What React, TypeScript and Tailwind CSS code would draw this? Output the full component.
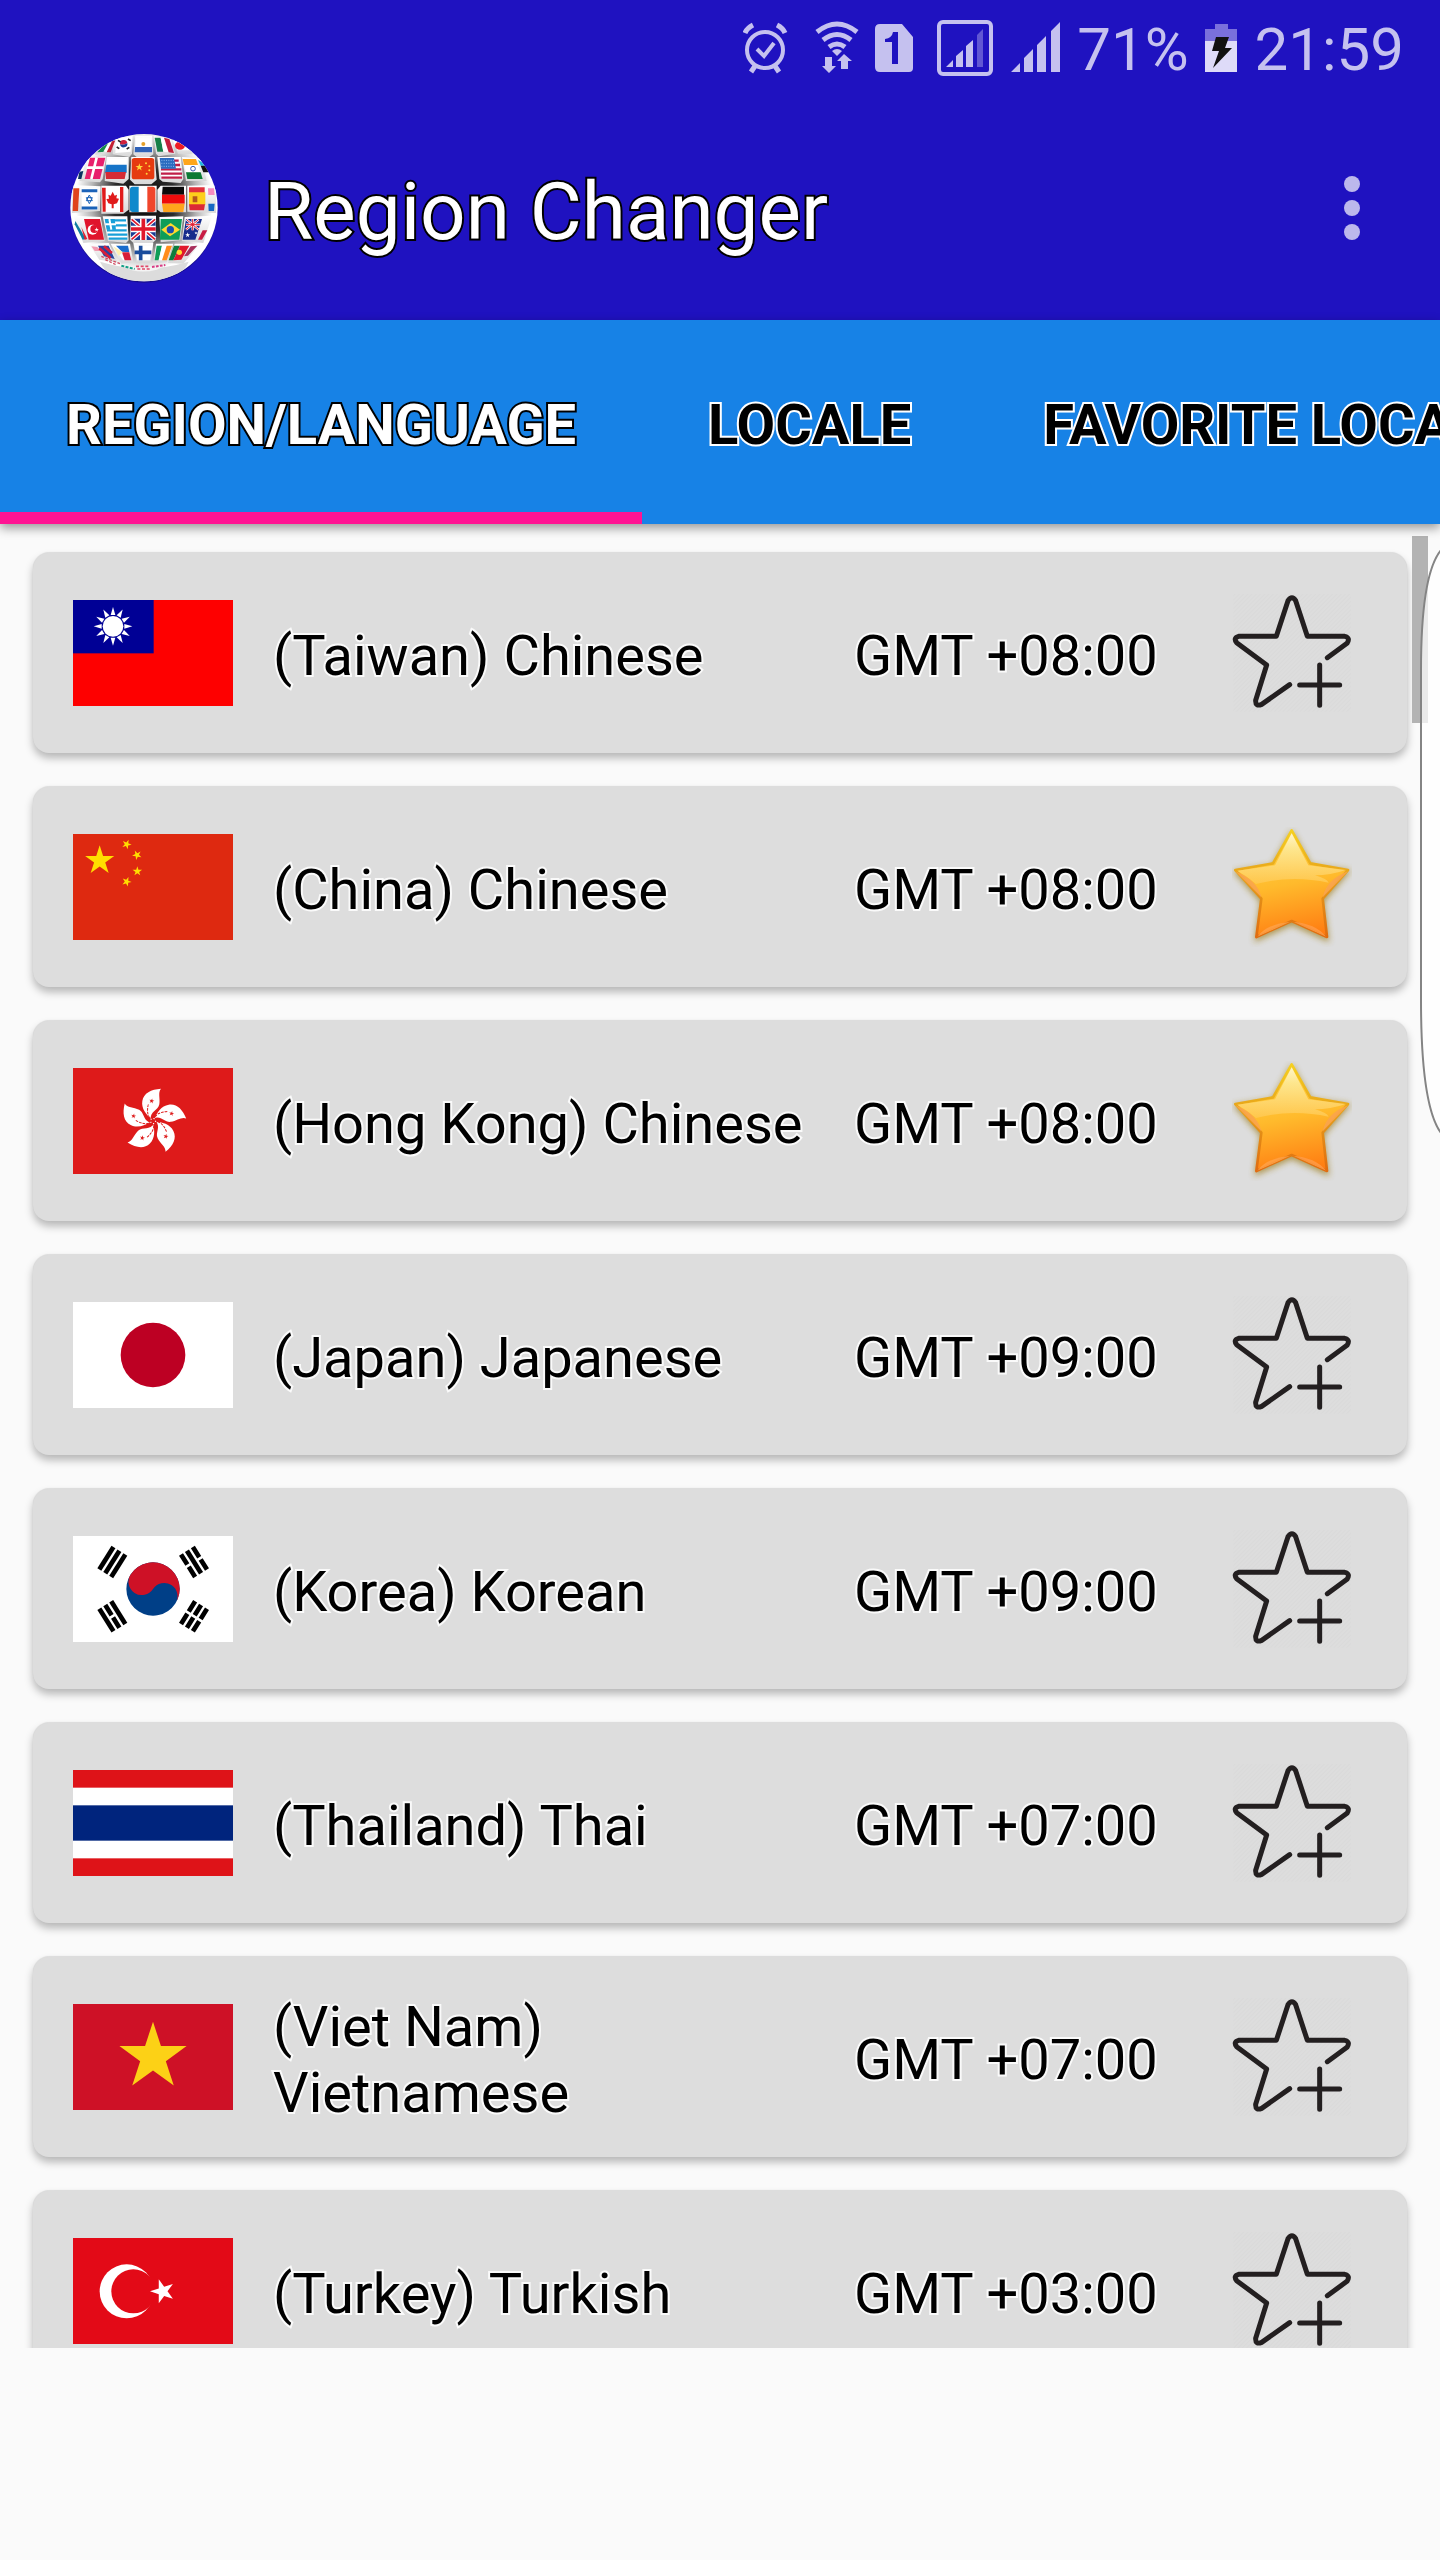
import React, { memo, useState } from 'react'
import clsx from 'clsx'

interface IRegion {
  country: string
  language: string
  gmt: string
  flag: React.ReactNode
}

interface IRegionCard {
  region: IRegion
  isFavorite: boolean
  onToggle: () => void
}

const starPoints = (cx: number, cy: number, r: number, turn = 0) =>
  Array.from({ length: 10 }, (_, i) => {
    const radius = i % 2 ? r * 0.382 : r
    const angle = ((i * 36 - 90 + turn) * Math.PI) / 180
    return `${(cx + radius * Math.cos(angle)).toFixed(1)},${(
      cy +
      radius * Math.sin(angle)
    ).toFixed(1)}`
  }).join(' ')

const TaiwanFlag = () => (
  <>
    <rect width="480" height="318" fill="#fe0000" />
    <rect width="242" height="160" fill="#000095" />
    <circle cx="120" cy="79" r="31" fill="#fff" />
    {Array.from({ length: 12 }, (_, i) => (
      <path
        key={i}
        d="M-7 -34 L0 -58 L7 -34Z"
        fill="#fff"
        transform={`translate(120 79) rotate(${i * 30})`}
      />
    ))}
  </>
)

const ChinaFlag = () => (
  <>
    <rect width="480" height="318" fill="#de2910" />
    <g fill="#ffde00">
      <polygon points={starPoints(80, 80, 46)} />
      <polygon points={starPoints(161, 31, 15, 23)} />
      <polygon points={starPoints(192, 63, 15, 46)} />
      <polygon points={starPoints(193, 112, 15, 0)} />
      <polygon points={starPoints(161, 143, 15, 21)} />
    </g>
  </>
)

const HongKongFlag = () => (
  <>
    <rect width="480" height="318" fill="#de1a1a" />
    {[0, 72, 144, 216, 288].map((turn) => (
      <g key={turn} transform={`translate(240 159) rotate(${turn})`}>
        <path
          d="M-3 -5 C-20 -18 -36 -38 -32 -60 C-28 -84 -6 -95 24 -97 C14 -86 22 -68 19 -50 C15 -30 -10 -30 -7 -2Z"
          fill="#fff"
        />
        <path
          d="M-10 -10 C-20 -22 -16 -42 -14 -50"
          fill="none"
          stroke="#de1a1a"
          strokeWidth="3"
          strokeDasharray="8 3"
        />
        <polygon points={starPoints(-4, -60, 8, 12)} fill="#de1a1a" />
      </g>
    ))}
  </>
)

const JapanFlag = () => (
  <>
    <rect width="480" height="318" fill="#fff" />
    <circle cx="240" cy="159" r="97" fill="#bd0023" />
  </>
)

const TRIGRAMS = [
  { x: 118, y: 78, turn: -58, broken: [false, false, false] },
  { x: 363, y: 78, turn: 58, broken: [true, false, true] },
  { x: 118, y: 241, turn: 58, broken: [false, true, false] },
  { x: 363, y: 241, turn: -58, broken: [true, true, true] },
]

const KoreaFlag = () => (
  <>
    <rect width="480" height="318" fill="#fff" />
    {TRIGRAMS.map(({ x, y, turn, broken }) => (
      <g
        key={`${x}-${y}`}
        transform={`translate(${x} ${y}) rotate(${turn})`}
        stroke="#000"
        strokeWidth="14"
      >
        {broken.map((isBroken, i) => (
          <path
            key={i}
            d={
              isBroken
                ? `M-40 ${i * 21 - 21}H-4M4 ${i * 21 - 21}H40`
                : `M-40 ${i * 21 - 21}H40`
            }
          />
        ))}
      </g>
    ))}
    <g transform="translate(240 159) rotate(33)">
      <circle r="80" fill="#003f87" />
      <path
        d="M-80 0A80 80 0 0 1 80 0A40 40 0 0 0 0 0A40 40 0 0 1 -80 0Z"
        fill="#ce1126"
      />
    </g>
  </>
)

const ThailandFlag = () => (
  <>
    <rect width="480" height="318" fill="#de1318" />
    <rect y="53" width="480" height="212" fill="#fff" />
    <rect y="106" width="480" height="106" fill="#00247d" />
  </>
)

const VietnamFlag = () => (
  <>
    <rect width="480" height="318" fill="#ce1126" />
    <polygon points={starPoints(240, 159, 106)} fill="#fcd116" />
  </>
)

const TurkeyFlag = () => (
  <>
    <rect width="480" height="318" fill="#e30a17" />
    <circle cx="161" cy="160" r="81" fill="#fff" />
    <circle cx="181" cy="160" r="66" fill="#e30a17" />
    <polygon points={starPoints(269, 160, 38, -90)} fill="#fff" />
  </>
)

const REGIONS: IRegion[] = [
  { country: 'Taiwan', language: 'Chinese', gmt: '+08:00', flag: <TaiwanFlag /> },
  { country: 'China', language: 'Chinese', gmt: '+08:00', flag: <ChinaFlag /> },
  { country: 'Hong Kong', language: 'Chinese', gmt: '+08:00', flag: <HongKongFlag /> },
  { country: 'Japan', language: 'Japanese', gmt: '+09:00', flag: <JapanFlag /> },
  { country: 'Korea', language: 'Korean', gmt: '+09:00', flag: <KoreaFlag /> },
  { country: 'Thailand', language: 'Thai', gmt: '+07:00', flag: <ThailandFlag /> },
  { country: 'Viet Nam', language: 'Vietnamese', gmt: '+07:00', flag: <VietnamFlag /> },
  { country: 'Turkey', language: 'Turkish', gmt: '+03:00', flag: <TurkeyFlag /> },
]

const TABS = ['REGION/LANGUAGE', 'LOCALE', 'FAVORITE LOCALE']

const StarAdd = () => (
  <svg viewBox="156 190 360 360" className="size-[120px]" fill="none">
    <defs>
      <pattern
        id="hatch"
        width="9"
        height="9"
        patternUnits="userSpaceOnUse"
        patternTransform="rotate(45)"
      >
        <path d="M1 0V9" stroke="#d7d7d7" strokeWidth="2" />
      </pattern>
    </defs>
    <rect x="160" y="193" width="353" height="353" fill="url(#hatch)" />
    <g
      stroke="#231f20"
      strokeWidth="15"
      strokeLinecap="round"
      strokeLinejoin="round"
    >
      <path d="M442 384L501 341Q512 324 494 320H382L347 213Q336 196 324 213L289 320H176Q159 325 170 339L260 406L227 512Q226 532 245 524L329 465" />
      <path d="M359 466H479M419 406V527" />
    </g>
  </svg>
)

const StarFull = () => (
  <svg viewBox="156 893 360 360" className="size-[120px]">
    <defs>
      <linearGradient id="starBody" x1="0.4" y1="0" x2="0.6" y2="1">
        <stop offset="0" stopColor="#ffd84a" />
        <stop offset="0.5" stopColor="#ffba2c" />
        <stop offset="1" stopColor="#ff7d12" />
      </linearGradient>
      <linearGradient id="starGloss" x1="0" y1="0" x2="0" y2="1">
        <stop offset="0" stopColor="#fffbe0" />
        <stop offset="0.3" stopColor="#fdeb9c" />
        <stop offset="1" stopColor="#ffc850" />
      </linearGradient>
      <linearGradient id="starEdge" x1="0" y1="0" x2="0" y2="1">
        <stop offset="0" stopColor="#f5d020" />
        <stop offset="0.5" stopColor="#e59a18" />
        <stop offset="1" stopColor="#e06c10" />
      </linearGradient>
      <filter id="starShadow" x="-10%" y="-10%" width="120%" height="125%">
        <feGaussianBlur stdDeviation="9" />
      </filter>
      <clipPath id="starClip">
        <path d="M335 900L391 1002L507 1020V1028L428 1108L445 1226L335 1175L226 1226L244 1108L162 1026V1020L279 1002Z" />
      </clipPath>
    </defs>
    <path
      d="M335 910L391 1010L505 1026L428 1116L443 1232L335 1183L228 1232L244 1116L166 1028L279 1010Z"
      fill="#a08020"
      stroke="#a08020"
      strokeWidth="8"
      opacity="0.75"
      filter="url(#starShadow)"
    />
    <path
      d="M335 903L391 1002L504 1022L428 1108L441 1223L335 1175L229 1223L244 1108L166 1022L279 1002Z"
      fill="url(#starBody)"
      stroke="url(#starEdge)"
      strokeWidth="8"
      strokeLinejoin="round"
    />
    <g clipPath="url(#starClip)">
      <path
        d="M335 912L385 1008L498 1022Q450 1038 405 1038Q440 1048 446 1060Q335 1036 228 1064Q200 1040 172 1024L285 1008Z"
        fill="url(#starGloss)"
        opacity="0.85"
      />
      <path d="M504 1026Q440 1050 428 1104Z" fill="#f9a44c" opacity="0.9" />
      <path d="M166 1026Q232 1052 244 1104Z" fill="#f9a44c" opacity="0.9" />
      <path d="M232 1222Q262 1182 335 1177Z" fill="#ffa24a" opacity="0.8" />
      <path d="M438 1222Q408 1182 335 1177Z" fill="#ff9c48" opacity="0.8" />
    </g>
  </svg>
)

const GlobeLogo = () => (
  <svg viewBox="90 70 444 450" className="h-[150px] w-[148px]" aria-hidden="true">
    <defs>
      <clipPath id="globe">
        <circle cx="312" cy="294" r="221" />
      </clipPath>
      <radialGradient id="globeBase" cx="0.5" cy="0.45" r="0.55">
        <stop offset="0" stopColor="#000" />
        <stop offset="0.4" stopColor="#2c2c2c" />
        <stop offset="0.66" stopColor="#b4b4b4" />
        <stop offset="0.85" stopColor="#fff" />
      </radialGradient>
      <linearGradient id="tile" x1="0" y1="0" x2="0" y2="1">
        <stop offset="0" stopColor="#fff" />
        <stop offset="1" stopColor="#d8d8d8" />
      </linearGradient>
    </defs>
    <circle cx="312" cy="299" r="220" fill="#000" opacity="0.25" />
    <g clipPath="url(#globe)">
      <rect x="90" y="70" width="444" height="450" fill="url(#globeBase)" />

      {/* cube faces */}
      <g fill="url(#tile)">
        <path d="M222 84L278 78L276 132L268 142L218 134Z" />
        <path d="M286 78H336L340 134L328 142H290L280 134Z" />
        <path d="M342 80L392 86L406 132L356 140L348 132Z" />
        <path d="M166 98L218 84L210 128L166 136Z" />
        <path d="M398 86L450 104L458 134L414 132Z" />
        <path d="M142 144L198 140L188 208L180 218L118 214Z" />
        <path d="M200 142L266 142V208L250 222L194 214Z" />
        <path d="M274 142H344L350 210L334 224H284L270 210Z" />
        <path d="M352 142L422 142L430 208L422 220L368 216L358 208Z" />
        <path d="M426 142L482 146L500 214L438 214Z" />
        <path d="M94 226L182 230L180 304L96 310Z" />
        <path d="M184 228H258L266 240V300L250 312H184Z" />
        <path d="M268 228H350V308H268Z" />
        <path d="M362 228H438V308H362L352 300V240Z" />
        <path d="M442 228L528 226V310L442 306Z" />
        <path d="M100 318L182 322L194 394L130 400Z" />
        <path d="M188 320H262L266 392L258 400L204 394Z" />
        <path d="M272 318H348V390L338 400H280L270 390Z" />
        <path d="M358 322L430 320L420 392L362 398Z" />
        <path d="M434 322L516 318L490 400L426 394Z" />
        <path d="M146 402L206 400L232 458L178 450Z" />
        <path d="M212 402H270L280 458L244 462Z" />
        <path d="M280 400H340L332 460H290Z" />
        <path d="M348 402H400L380 458L340 460Z" />
        <path d="M404 402L480 404L430 462L384 460Z" />
      </g>

      {/* first row */}
      <path d="M196 100L220 92L198 126L172 128Z" fill="#168a4a" />
      <path d="M206 98L224 92L206 128L190 126Z" fill="#fff" />
      <path d="M216 95L226 92L212 128L200 128Z" fill="#c42032" />
      <path d="M228 88L276 82L272 126L226 130Z" fill="#fff" />
      <path d="M240 104A11 11 0 0 1 262 100Q252 108 240 104Z" fill="#d0203c" />
      <path d="M240 104Q252 108 262 100A11 11 0 0 1 240 104Z" fill="#1b3f92" />
      <path d="M234 92l8 5M264 88l8 5M230 112l8 5M260 118l8-5" stroke="#222" strokeWidth="5" />
      <path d="M288 86H334L336 128H284Z" fill="#fff" />
      <path d="M285 112H336V128H284Z" fill="#2f62b8" />
      <circle cx="310" cy="103" r="6" fill="#e3a02b" />
      <path d="M344 84L362 84L370 126L352 126Z" fill="#178048" />
      <path d="M362 84L374 84L386 128L370 126Z" fill="#fff" />
      <path d="M372 84L388 88L402 130L386 128Z" fill="#c41e3c" />
      <path d="M398 92L436 100L450 122L412 122Z" fill="#fff" />
      <ellipse cx="420" cy="108" rx="15" ry="12" fill="#ee1c24" />

      {/* second row */}
      <path d="M150 144L196 144L180 208L134 208Z" fill="#e8206c" />
      <path d="M140 174H190M170 144L154 208" stroke="#fff" strokeWidth="8" />
      <path d="M118 186L130 184L124 208L114 208Z" fill="#083060" />
      <path d="M202 148H260V168H198Z" fill="#fff" />
      <path d="M199 165H260V189H195Z" fill="#1674c8" />
      <path d="M196 187H258L254 208H198Z" fill="#d52b35" />
      <rect x="275" y="145" width="68" height="64" rx="8" fill="#e63a10" />
      <polygon points={starPoints(298, 173, 12)} fill="#ffd63b" />
      <g fill="#ffd63b">
        <circle cx="318" cy="161" r="3" />
        <circle cx="328" cy="170" r="3" />
        <circle cx="328" cy="182" r="3" />
        <circle cx="320" cy="192" r="3" />
      </g>
      <path d="M360 146L412 146L426 208L364 208Z" fill="#fff" />
      <path d="M363 153H416M363 166H420M363 179H424M363 192H426M364 204H426" stroke="#c01f48" strokeWidth="7" />
      <path d="M359 145H402L408 177H363Z" fill="#2b6cc0" />
      <path d="M364 152H402M364 161H404M364 170H406" stroke="#bfe0ff" strokeWidth="2" strokeDasharray="3 4" />
      <path d="M428 148H468L474 166H432Z" fill="#ffa61a" />
      <path d="M432 166H474L482 188H438Z" fill="#fff" />
      <path d="M438 188H482L488 208H442Z" fill="#0c7a34" />
      <circle cx="459" cy="177" r="7" fill="none" stroke="#3c5cae" strokeWidth="3" />
      <path d="M474 150L486 158L496 168H482Z" fill="#1fb8e0" />
      <path d="M482 168H498L506 188H490Z" fill="#111" />

      {/* third row */}
      <path d="M100 236H118L114 304H98Z" fill="#e0441c" />
      <rect x="125" y="236" width="48" height="64" fill="#fff" />
      <path d="M125 243H172M125 295H172" stroke="#1a62b8" strokeWidth="9" />
      <path d="M148 256L157 273H139ZM148 282L139 264H157Z" fill="none" stroke="#1a62b8" strokeWidth="3" />
      <rect x="186" y="232" width="64" height="75" rx="6" fill="#fff" />
      <path d="M186 234H197V306H188ZM240 232H250V307H240Z" fill="#e01b1b" />
      <path d="M218 246L224 258L231 255L229 266L237 267L231 281L221 284V296H215V284L205 281L199 268L207 267L205 255L212 258Z" fill="#e01b1b" />
      <rect x="270" y="231" width="76" height="76" rx="8" fill="#fff" />
      <path d="M278 231H296V307H278Q270 307 270 299V239Q270 231 278 231Z" fill="#1089cc" />
      <path d="M322 231H338Q346 231 346 239V299Q346 307 338 307H322Z" fill="#f0462c" />
      <path d="M368 231H432V255H366Z" fill="#0a0a0a" />
      <rect x="366" y="255" width="68" height="27" fill="#ee0c0c" />
      <path d="M366 282H434L430 307H370Z" fill="#ffa51c" />
      <path d="M447 233H494V250H447Z" fill="#e0323c" />
      <path d="M447 248H496V286H447Z" fill="#fdcf1b" />
      <path d="M447 284H495L492 302H449Z" fill="#dc2a36" />
      <path d="M458 260h14v18h-14z" fill="#b35a1c" />
      <path d="M504 236H522L524 256H505Z" fill="#f58cc0" />
      <path d="M505 282H524L522 304H506Z" fill="#1668c4" />

      {/* fourth row */}
      <path d="M106 334L138 388L128 390L104 344Z" fill="#0f7ca0" />
      <path d="M124 352L142 388L134 390Z" fill="#e02030" />
      <path d="M132 328L180 328L192 390L146 390Z" fill="#e0142c" />
      <circle cx="158" cy="360" r="15" fill="#fff" />
      <circle cx="163" cy="358" r="12" fill="#e0142c" />
      <polygon points={starPoints(170, 360, 7)} fill="#fff" />
      <path d="M194 328H258L262 390H206Z" fill="#fff" />
      <path d="M196 332H258M198 347H260M201 362H260M203 375H262M206 387H262" stroke="#18a0d8" strokeWidth="7" />
      <path d="M194 328H224L228 360H200Z" fill="#18a0d8" />
      <path d="M208 328L214 360M196 344H228" stroke="#fff" strokeWidth="6" />
      <rect x="273" y="327" width="74" height="64" rx="6" fill="#1c3c94" />
      <path d="M275 329L345 389M345 329L275 389" stroke="#fff" strokeWidth="12" />
      <path d="M275 329L345 389M345 329L275 389" stroke="#e0182c" strokeWidth="5" />
      <path d="M310 327V391M273 358H347" stroke="#fff" strokeWidth="20" />
      <path d="M310 327V391M273 358H347" stroke="#e0182c" strokeWidth="11" />
      <path d="M362 328H426L418 390H360Z" fill="#0f9d58" />
      <path d="M392 340L420 360L390 380L364 360Z" fill="#ffd92e" />
      <circle cx="391" cy="360" r="11" fill="#1b4eae" />
      <path d="M438 328H486L466 390H428Z" fill="#162c8c" />
      <path d="M440 330L476 360M476 330L438 360M458 328V362M438 345H480" stroke="#fff" strokeWidth="7" />
      <path d="M440 330L476 360M476 330L438 360M458 328V362M438 345H480" stroke="#e0182c" strokeWidth="3" />
      <polygon points={starPoints(443, 376, 8)} fill="#fff" />
      <polygon points={starPoints(468, 370, 5)} fill="#fff" />
      <path d="M488 362L502 362L486 390H474Z" fill="#c81c44" />

      {/* fifth row */}
      <path d="M154 410L172 412L182 424L164 424Z" fill="#f29ab0" />
      <path d="M174 408L206 408L224 448L192 440Z" fill="#28459e" />
      <path d="M178 416L212 446M192 410L216 430" stroke="#d81e38" strokeWidth="8" />
      <path d="M218 408L264 408L274 452H250Z" fill="#fff" />
      <path d="M228 408H264L268 428L246 426Z" fill="#1a6ccc" />
      <path d="M246 428L268 428L274 452H254Z" fill="#d81e38" />
      <path d="M220 410L248 428L236 438Z" fill="#fff0b0" />
      <path d="M284 408H336L330 452H292Z" fill="#fff" />
      <path d="M302 408V452M284 428H334" stroke="#1a4c9c" strokeWidth="11" />
      <path d="M350 408H366L356 452H344Z" fill="#0f9d58" />
      <path d="M366 408H382L368 452H356Z" fill="#fff" />
      <path d="M380 408H396L380 452H366Z" fill="#ff8c1a" />
      <path d="M402 408H420L400 452H386Z" fill="#0e7c3c" />
      <path d="M420 408H448L424 450L400 452Z" fill="#e0182c" />
      <circle cx="418" cy="428" r="8" fill="#ffd92e" />
      <path d="M452 410L472 408L444 438L432 440Z" fill="#a8305c" />
      <path d="M184 440L240 462M196 450L230 466" stroke="#d04860" strokeWidth="4" strokeDasharray="8 5" />

      {/* pole */}
      <path d="M180 456Q312 496 446 456Q420 520 312 520Q210 520 180 456Z" fill="#dcdcdc" />
      <path d="M240 466Q312 482 384 464L350 480Q312 490 276 482Z" fill="#f4f4f4" />
      <path d="M244 468L284 478" stroke="#14a088" strokeWidth="6" strokeDasharray="9 4" />
      <path d="M288 470H330M292 478H334" stroke="#e04868" strokeWidth="5" strokeDasharray="9 5" />
      <path d="M336 472L376 466" stroke="#d83c84" strokeWidth="6" strokeDasharray="8 4" />
    </g>
  </svg>
)

const StatusBar = () => (
  <div className="flex h-24 items-center justify-end gap-4 pr-9 text-[60px] leading-none text-[#c5c1ef]">
    <svg viewBox="0 0 56 56" className="size-14" fill="none" stroke="currentColor" aria-label="Alarm">
      <circle cx="22" cy="30" r="18" strokeWidth="4" />
      <path d="M14 29L21 36L31 23" strokeWidth="4" />
      <path d="M2 13Q4 8 10 5M42 13Q40 8 34 5M12 46L8 52M32 46L36 52" strokeWidth="5" />
    </svg>
    <svg viewBox="0 0 44 56" className="h-14 w-11" fill="none" stroke="currentColor" aria-label="Wi-Fi">
      <path d="M2 12Q22 -4 42 12" strokeWidth="5" />
      <path d="M8 20Q22 9 36 20" strokeWidth="5" />
      <path d="M14 27Q22 21 30 27" strokeWidth="5" />
      <path d="M17 31Q22 27 27 31L22 36Z" fill="currentColor" stroke="none" />
      <path
        d="M10 37H17V46H21L14 53L7 46H10ZM26 49V41H22L29 34L37 41H33V49Z"
        fill="currentColor"
        stroke="none"
      />
    </svg>
    <svg viewBox="0 0 44 56" className="h-14 w-11" aria-label="SIM 1">
      <path d="M5 4H27L38 17V48Q38 52 34 52H5Q0 52 0 47V9Q0 4 5 4Z" fill="currentColor" />
      <path d="M10 19Q17 18 18 12H23V44H17V22H10Z" fill="#1f12c0" />
    </svg>
    <svg viewBox="0 0 60 56" className="h-14 w-15" aria-label="Signal">
      <rect x="4" y="2" width="52" height="52" rx="4" fill="none" stroke="currentColor" strokeWidth="4" />
      <path d="M11 47L18 40V47ZM21 36L28 30V47H21ZM31 26L38 20V47H31Z" fill="currentColor" />
      <path d="M42 15L48 9V47H42Z" fill="currentColor" opacity="0.4" />
    </svg>
    <svg viewBox="0 0 50 56" className="h-14 w-[50px]" fill="currentColor" aria-label="Signal">
      <path d="M0 52L9 43V52ZM13 38L22 29V52H13ZM26 25L35 16V52H26ZM40 11L49 2V52H40Z" />
    </svg>
    <span className="pt-1">71%</span>
    <svg viewBox="0 0 34 56" className="h-14 w-[34px]" aria-label="Charging">
      <path d="M10 4H23V9H32V22H0V9H10Z" fill="#7a70dc" />
      <path d="M0 21H32V52H0Z" fill="#dedbf8" />
      <path d="M11 17H24L20 28H27L8 48L14 31H7Z" fill="#111" />
    </svg>
    <time className="pt-1">21:59</time>
  </div>
)

const RegionCard = ({ region, isFavorite, onToggle }: IRegionCard) => (
  <li className="flex min-h-[200px] items-center rounded-2xl bg-[#ddd] pr-[55px] pl-10 shadow-[0_-1px_1px_rgba(0,0,0,0.1),0_5px_8px_rgba(0,0,0,0.28)]">
    <svg
      viewBox="0 0 480 318"
      className="h-[106px] w-40 shrink-0"
      role="img"
      aria-label={region.country}
    >
      {region.flag}
    </svg>
    <span className="flex-1 pt-1.5 pr-4 pl-10 text-[56px] leading-[66px] [paint-order:stroke_fill] [-webkit-text-stroke:4px_#fafafa]">
      ({region.country}) {region.language}
    </span>
    <span className="w-[378px] shrink-0 pt-1.5 text-[56px] leading-[66px] [paint-order:stroke_fill] [-webkit-text-stroke:4px_#fafafa]">
      GMT {region.gmt}
    </span>
    <button
      type="button"
      className="shrink-0"
      aria-label={`Favorite ${region.country}`}
      aria-pressed={isFavorite}
      onClick={onToggle}
    >
      {isFavorite ? <StarFull /> : <StarAdd />}
    </button>
  </li>
)

const App = () => {
  const [activeTab, setActiveTab] = useState(TABS[0])
  const [favorites, setFavorites] = useState(['China', 'Hong Kong'])

  const toggleFavorite = (country: string) => {
    setFavorites((prev) =>
      prev.includes(country)
        ? prev.filter((item) => item !== country)
        : [...prev, country]
    )
  }

  return (
    <div className="relative flex h-screen flex-col overflow-hidden bg-[#fafafa] font-[Roboto,sans-serif] text-black">
      <header className="shrink-0 bg-[#1f12c0]">
        <StatusBar />
        <div className="flex h-56 items-center pr-14 pl-[70px]">
          <GlobeLogo />
          <h1 className="flex-1 pt-2 pl-[46px] text-[80px] leading-none text-white [paint-order:stroke_fill] [-webkit-text-stroke:4px_#000]">
            Region Changer
          </h1>
          <button
            type="button"
            aria-label="More options"
            className="flex w-16 flex-col items-center gap-2"
          >
            <span className="size-4 rounded-full bg-[#bcb8ec]" />
            <span className="size-4 rounded-full bg-[#bcb8ec]" />
            <span className="size-4 rounded-full bg-[#bcb8ec]" />
          </button>
        </div>
      </header>

      <nav className="z-10 flex h-[204px] shrink-0 overflow-x-auto overflow-y-hidden bg-[#1782e6] shadow-[0_4px_10px_rgba(0,0,0,0.4)] [scrollbar-width:none]">
        {TABS.map((tab) => (
          <button
            key={tab}
            type="button"
            onClick={() => setActiveTab(tab)}
            className={clsx(
              'shrink-0 border-b-12 px-[66px] pt-[18px] text-[56px] font-bold whitespace-nowrap [paint-order:stroke_fill]',
              tab === activeTab
                ? 'border-[#ff1493] text-white [-webkit-text-stroke:4px_#000]'
                : 'border-transparent text-black [-webkit-text-stroke:4px_#fff]'
            )}
          >
            {tab}
          </button>
        ))}
      </nav>

      <main className="relative min-h-0 flex-1 overflow-hidden">
        <ul className="flex flex-col gap-[34px] px-[33px] pt-[29px]">
          {REGIONS.map((region) => (
            <RegionCard
              key={region.country}
              region={region}
              isFavorite={favorites.includes(region.country)}
              onToggle={() => toggleFavorite(region.country)}
            />
          ))}
        </ul>
        <div className="absolute top-3 right-3 h-[187px] w-4 bg-[#b3b3b3]" />
        {/* edge panel handle */}
        <svg
          viewBox="0 0 20 590"
          className="absolute top-6 right-0 h-[590px] w-5"
          aria-hidden="true"
        >
          <path
            d="M21 2Q1 26 1 122V452Q1 558 21 585Z"
            fill="#fff"
            fillOpacity="0.72"
            stroke="#848484"
            strokeWidth="2"
          />
        </svg>
      </main>

      {/* room for the banner */}
      <footer className="h-[212px] shrink-0" />
    </div>
  )
}

export default memo(App)
